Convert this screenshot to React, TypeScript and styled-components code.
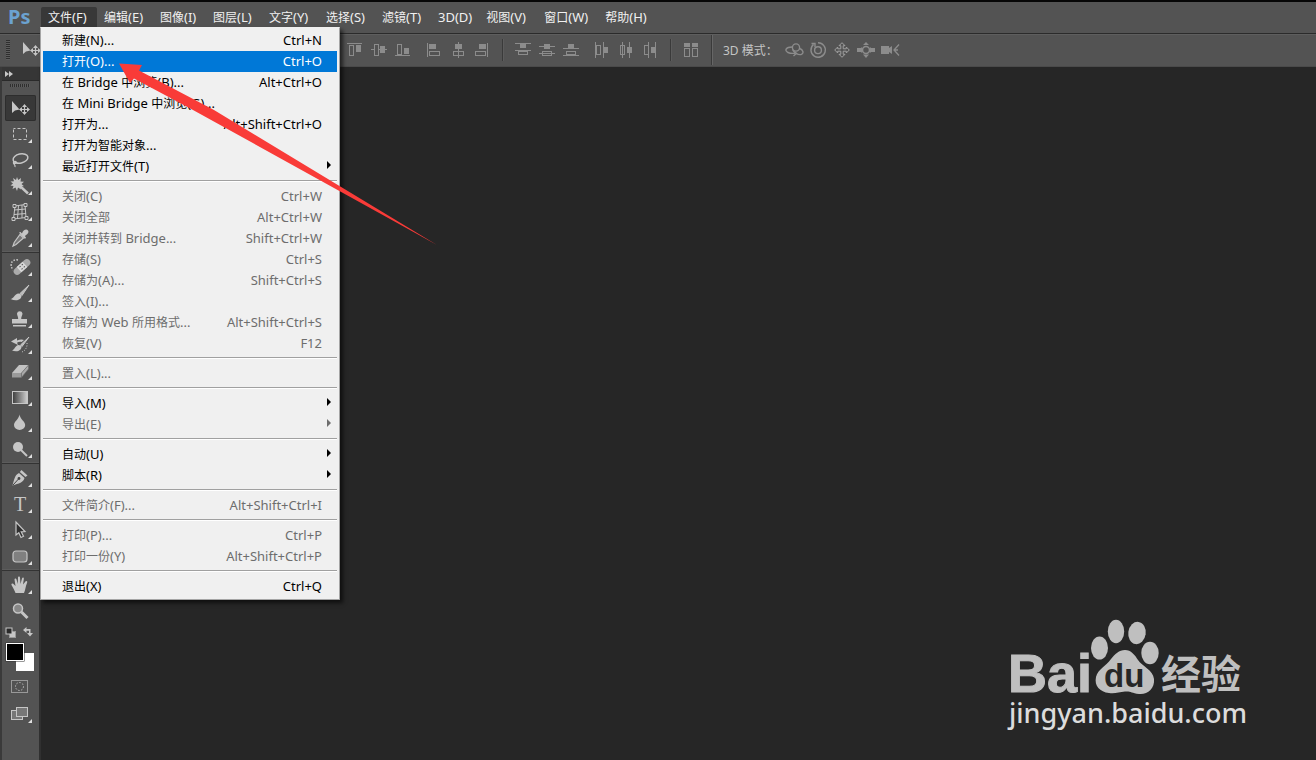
import React from 'react';
import styled, { createGlobalStyle } from 'styled-components';

const GlobalStyle = createGlobalStyle`
  *, *::before, *::after { box-sizing: border-box; }
  body {
    margin: 0;
    background: #262626;
    font-family: 'Noto Sans', 'Noto Sans CJK SC', sans-serif;
    font-size: 12px;
    color: #f0f0f0;
  }
  button { font: inherit; color: inherit; background: none; border: 0; padding: 0; margin: 0; text-align: left; }
  ul { list-style: none; margin: 0; padding: 0; }
`;

const Shell = styled.div`
  position: relative;
  display: flex;
  flex-direction: column;
  min-height: 100vh;
  overflow: hidden;
  background: #262626;
`;

const MenuBar = styled.nav`
  display: flex;
  align-items: flex-start;
  height: 34px;
  padding-top: 5px;
  border-top: 2px solid #060606;
  border-bottom: 1px solid #2b2b2b;
  background: #535353;
`;

const Brand = styled.span`
  width: 41px;
  padding-left: 8px;
  font: bold 20px/20px 'Noto Sans', sans-serif;
  color: #6ba2d0;
`;

const MenuSlot = styled.div<{ $slot: number }>`
  position: relative;
  flex: 0 0 ${(p) => p.$slot}px;
`;

const MenuTitle = styled.button<{ $open?: boolean }>`
  display: block;
  width: 100%;
  height: 20px;
  padding: 0 7px;
  line-height: 20px;
  white-space: nowrap;
  border-radius: 2px 2px 0 0;
  background: ${(p) => (p.$open ? '#383838' : 'transparent')};
`;

const Latin = styled.span`
  font-size: 13px;
`;

const Dropdown = styled.ul`
  position: absolute;
  z-index: 5;
  top: 20px;
  left: -1px;
  width: 300px;
  padding: 2px;
  color: #000;
  background: #f0f0f0;
  border: 1px solid #a5a5a5;
  border-top-color: #f0f0f0;
  box-shadow: 3px 3px 4px rgba(0, 0, 0, 0.6);
`;

const MenuItem = styled.button<{ $active?: boolean }>`
  display: flex;
  align-items: center;
  justify-content: space-between;
  width: 100%;
  height: 21px;
  padding: 0 15px 0 19px;
  line-height: 21px;
  white-space: nowrap;
  color: ${(p) => (p.$active ? '#fff' : '#000')};
  background: ${(p) => (p.$active ? '#0078d7' : 'transparent')};
  &:disabled { color: #6d6d6d; }
`;

const Rule = styled.li`
  height: 9px;
  padding-top: 3px;
  &::before {
    content: '';
    display: block;
    height: 2px;
    border-top: 1px solid #a0a0a0;
    border-bottom: 1px solid #fff;
  }
`;

const SubArrow = styled.svg`
  margin-right: -9px;
  margin-bottom: 4px;
`;

const OptionsBar = styled.div`
  display: flex;
  align-items: center;
  height: 33px;
  padding: 0 0 2px 6px;
  background: #535353;
  border-top: 1px solid #5e5e5e;
  border-bottom: 1px solid #4a4a4a;
`;

const Grip = styled.span`
  width: 4px;
  height: 20px;
  background: repeating-linear-gradient(#2e2e2e 0 1px, #5c5c5c 1px 2px);
`;

const CurrentTool = styled.button`
  width: 20px;
  height: 20px;
  margin: 0 290px 0 12px;
`;

const IconGroup = styled.div<{ $tight?: boolean }>`
  display: flex;
  gap: 8px;
  margin-left: ${(p) => (p.$tight ? 11 : 15)}px;
`;

const IconButton = styled.button`
  display: block;
  width: 16px;
  height: 16px;
`;

const Divider = styled.span<{ $full?: boolean }>`
  width: 2px;
  height: ${(p) => (p.$full ? 30 : 22)}px;
  margin-left: 12px;
  border-left: 1px solid #3a3a3a;
  border-right: 1px solid ${(p) => (p.$full ? '#666' : '#5c5c5c')};
`;

const ModeLabel = styled.span`
  width: 52px;
  margin-left: 10px;
  white-space: nowrap;
  color: #c4c4c4;
`;

const Workspace = styled.div`
  display: flex;
  flex: 1;
`;

const ToolPanel = styled.aside`
  display: flex;
  flex-direction: column;
  width: 41px;
  background: #535353;
  border-left: 2px solid #3a3a3a;
  border-right: 2px solid #303030;
`;

const PanelHeader = styled.button`
  display: block;
  height: 14px;
  padding-left: 3px;
  background: #363636;
  border-bottom: 1px solid #2a2a2a;
  line-height: 0;
`;

const PanelGrip = styled.span`
  width: 20px;
  height: 3px;
  margin: 3px 0 8px 8px;
  background: repeating-linear-gradient(90deg, #2e2e2e 0 1px, #5c5c5c 1px 2px);
`;

const ToolGroup = styled.div`
  display: flex;
  flex-direction: column;
  padding-left: 3px;
  & + & {
    margin-top: 1px;
    padding-top: 1px;
    border-top: 1px solid #333;
    box-shadow: 0 -1px 0 #5c5c5c;
  }
`;

const ToolButton = styled.button<{ $active?: boolean }>`
  display: block;
  width: 31px;
  height: 26px;
  line-height: 0;
  border-radius: 2px;
  background: ${(p) => (p.$active ? '#383838' : 'transparent')};
  box-shadow: ${(p) => (p.$active ? 'inset 0 0 0 1px #2d2d2d' : 'none')};
`;

const ColorArea = styled.div`
  padding-left: 3px;
  line-height: 0;
`;

const Canvas = styled.main`
  position: relative;
  flex: 1;
`;

const Watermark = styled.div`
  position: absolute;
  right: 69px;
  bottom: 30px;
  display: flex;
  flex-direction: column;
  width: 238px;
  color: #dcdcdc;
`;

const SiteLink = styled.a`
  font: 500 27px/34px 'Noto Sans', sans-serif;
  color: #dcdcdc;
  text-decoration: none;
  white-space: nowrap;
`;

const Annotation = styled.svg`
  position: absolute;
  z-index: 10;
  top: 60px;
  left: 116px;
  pointer-events: none;
`;

function Mixed({ text }: { text: string }) {
  const parts = text.split(/([\x20-\x7e]+)/).filter(Boolean);
  return (
    <span>
      {parts.map((p, i) => (/^[\x20-\x7e]/.test(p) ? <Latin key={i}>{p}</Latin> : p))}
    </span>
  );
}

type Entry = { label: string; keys?: string; off?: boolean; sub?: boolean; active?: boolean };

const fileMenu: (Entry | null)[] = [
  { label: '新建(N)...', keys: 'Ctrl+N' },
  { label: '打开(O)...', keys: 'Ctrl+O', active: true },
  { label: '在 Bridge 中浏览(B)...', keys: 'Alt+Ctrl+O' },
  { label: '在 Mini Bridge 中浏览(G)...' },
  { label: '打开为...', keys: 'Alt+Shift+Ctrl+O' },
  { label: '打开为智能对象...' },
  { label: '最近打开文件(T)', sub: true },
  null,
  { label: '关闭(C)', keys: 'Ctrl+W', off: true },
  { label: '关闭全部', keys: 'Alt+Ctrl+W', off: true },
  { label: '关闭并转到 Bridge...', keys: 'Shift+Ctrl+W', off: true },
  { label: '存储(S)', keys: 'Ctrl+S', off: true },
  { label: '存储为(A)...', keys: 'Shift+Ctrl+S', off: true },
  { label: '签入(I)...', off: true },
  { label: '存储为 Web 所用格式...', keys: 'Alt+Shift+Ctrl+S', off: true },
  { label: '恢复(V)', keys: 'F12', off: true },
  null,
  { label: '置入(L)...', off: true },
  null,
  { label: '导入(M)', sub: true },
  { label: '导出(E)', sub: true, off: true },
  null,
  { label: '自动(U)', sub: true },
  { label: '脚本(R)', sub: true },
  null,
  { label: '文件简介(F)...', keys: 'Alt+Shift+Ctrl+I', off: true },
  null,
  { label: '打印(P)...', keys: 'Ctrl+P', off: true },
  { label: '打印一份(Y)', keys: 'Alt+Shift+Ctrl+P', off: true },
  null,
  { label: '退出(X)', keys: 'Ctrl+Q' },
];

const menus: [string, number][] = [
  ['文件(F)', 56],
  ['编辑(E)', 56],
  ['图像(I)', 53],
  ['图层(L)', 56],
  ['文字(Y)', 57],
  ['选择(S)', 56],
  ['滤镜(T)', 56],
  ['3D(D)', 48],
  ['视图(V)', 58],
  ['窗口(W)', 61],
  ['帮助(H)', 58],
];

const G = '#8c8c8c';
const box = (x: number, y: number, w: number, h: number) => (
  <rect x={x + 0.5} y={y + 0.5} width={w - 1} height={h - 1} fill="none" stroke={G} />
);
const solid = (x: number, y: number, w: number, h: number) => (
  <rect x={x} y={y} width={w} height={h} fill={G} />
);

const alignVertical = [
  <>{solid(0, 1, 15, 1)}{box(2, 3, 5, 11)}{solid(9, 3, 5, 7)}</>,
  <>{solid(0, 7, 16, 1)}{box(3, 2, 5, 12)}<rect x="4" y="7" width="3" height="1" fill="#535353" />{solid(9, 4, 5, 7)}</>,
  <>{solid(0, 13, 15, 1)}{box(2, 2, 5, 11)}{solid(9, 6, 5, 6)}</>,
];
const alignHorizontal = [
  <>{solid(1, 1, 1, 14)}{solid(3, 2, 7, 5)}{box(3, 9, 11, 5)}</>,
  <>{solid(8, 0, 1, 16)}{solid(5, 2, 7, 5)}{box(3, 9, 11, 5)}</>,
  <>{solid(13, 1, 1, 14)}{solid(5, 2, 7, 5)}{box(1, 9, 11, 5)}</>,
];
const distributeVertical = [
  <>{solid(0, 1, 16, 1)}{solid(5, 2, 6, 4)}{solid(0, 8, 16, 1)}{box(3, 9, 10, 4)}</>,
  <>{solid(0, 4, 16, 1)}{solid(5, 2, 6, 5)}{solid(0, 11, 16, 1)}{box(3, 9, 10, 5)}</>,
  <>{solid(0, 6, 16, 1)}{solid(5, 2, 6, 4)}{solid(0, 13, 16, 1)}{box(3, 9, 10, 4)}</>,
];
const distributeHorizontal = [
  <>{solid(1, 0, 1, 16)}{box(2, 3, 5, 10)}{solid(9, 0, 1, 16)}{solid(10, 5, 4, 6)}</>,
  <>{solid(4, 0, 1, 16)}{box(2, 3, 5, 10)}{solid(11, 0, 1, 16)}{solid(9, 5, 5, 6)}</>,
  <>{solid(6, 0, 1, 16)}{box(2, 3, 5, 10)}{solid(13, 0, 1, 16)}{solid(9, 5, 4, 6)}</>,
];
const autoAlign = [
  <>{solid(1, 1, 6, 4)}{box(1, 6, 6, 9)}{solid(9, 1, 6, 4)}{box(9, 6, 6, 9)}</>,
];
const modes3d = [
  <g fill="none" stroke={G} strokeWidth="1.4">
    <circle cx="10" cy="5.500" r="3.600" />
    <path d="M6 5C0 5 -2 8.500 2 10.500C4 11.500 7 11.500 9 11.300M6.500 7.500C8 11 12 13 15 12.500C18.500 11.500 17 7.500 13.500 6.500M7.500 14L10.500 11.300L7.500 9" />
  </g>,
  <g fill="none" stroke={G} strokeWidth="1.4">
    <path d="M3.500 2.500A7.200 7.200 0 1 0 8 .8M1.500 1.500H5V5" />
    <circle cx="8" cy="8.200" r="3.400" />
  </g>,
  <path d="M8 .7L11 3.700H9.200V6.800H12.300V5L15.300 8L12.300 11V9.200H9.200V12.300H11L8 15.300L5 12.300H6.800V9.200H3.700V11L.7 8L3.700 5V6.800H6.800V3.700H5Z" fill="none" stroke="#a0a0a0" />,
  <g fill={G}>
    <path d="M8 0L11 3H5ZM8 16L11 12.500H5ZM-1 6H3V5L6 8L3 11V10H-1ZM17 6H13V5L10 8L13 11V10H17Z" />
    <circle cx="8" cy="8" r="3.500" fill="#535353" stroke={G} strokeWidth="1.600" />
  </g>,
  <g fill={G}>
    <path d="M-1 4H7V6L10 4V12L7 10V12H-1Z" />
    <path d="M17 2.500L12 8L17 13.500M12 8H16" fill="none" stroke={G} strokeWidth="1.300" />
  </g>,
];

function Icons({ items, name, tight }: { items: React.ReactNode[]; name: string; tight?: boolean }) {
  return (
    <IconGroup role="group" aria-label={name} $tight={tight}>
      {items.map((art, i) => (
        <IconButton key={i} type="button" aria-label={`${name} ${i + 1}`}>
          <svg width="16" height="16" viewBox="0 0 16 16" overflow="visible" display="block">{art}</svg>
        </IconButton>
      ))}
    </IconGroup>
  );
}

const C = '#c6c6c6';
const moveArt = (
  <>
    <path d="M7 6V18L10 15.500L14.500 14.500Z" fill={C} />
    <path d="M19.500 9L22 12H20.100V13.900H22V12L25 14.500L22 17V15.100H20.100V17H22L19.500 20L17 17H18.900V15.100H17V17L14 14.500L17 12V13.900H18.900V12H17Z" fill={C} />
  </>
);

type Tool = { name: string; art: React.ReactNode; single?: boolean };
const toolGroups: Tool[][] = [
  [
    { name: '移动', single: true, art: moveArt },
    { name: '选框', art: <rect x="8.500" y="7.500" width="13" height="11" fill="none" stroke={C} strokeDasharray="3 2" strokeDashoffset="1" /> },
    {
      name: '套索',
      art: (
        <g fill="none" stroke={C} strokeWidth="1.500">
          <ellipse cx="15.500" cy="11.500" rx="7.500" ry="4.500" transform="rotate(-12 15.500 11.500)" />
          <path d="M9 14C7 16 10.500 17.500 11.500 15.500C11.500 14 8.500 14 8.500 16.500C9.500 17.500 10.500 18 10 20" strokeWidth="1.200" />
        </g>
      ),
    },
    {
      name: '魔棒',
      art: (
        <>
          <path d="M12 4L13.200 7L16 5L15.500 8.500L19 8.700L16.500 11L19 13.300L15.500 13L16 16.500L13 14.500L12 18L10.500 14.500L7.500 16L8.500 13L5.500 12.500L8 10.500L5.500 8.500L9 8.300L8 5L11 7Z" fill={C} />
          <path d="M15 13L23 20.500" stroke={C} strokeWidth="2.400" />
        </>
      ),
    },
    {
      name: '透视裁剪',
      art: (
        <g fill="none" stroke={C}>
          <path d="M10 7L20 5.500L21 18.500L8.500 20ZM9.500 11L20.500 10M9 15.500L21 14.500M13.500 6.500L12.500 19.500M17 6L17 19" />
          <path d="M8 5.500H11V8.500H8ZM19 4.500H22V7.500H19ZM7 18.500H10V21.500H7ZM20 17.500H23V20.500H20Z" fill="#535353" />
        </g>
      ),
    },
    {
      name: '吸管',
      art: (
        <>
          <path d="M15 9.500L18.500 13L11 19.500L8 21L9.200 17.500Z" fill="#777" stroke={C} strokeWidth="1.200" />
          <path d="M14 7.500L15.500 7L17 8.500C18 5 21.500 3.500 23 5.500C24.500 7.500 22 9.500 19.800 11L21 12.500L20 14Z" fill={C} />
        </>
      ),
    },
  ],
  [
    {
      name: '修复画笔',
      art: (
        <>
          <path d="M13 6C7 5 4 10 8 16" fill="none" stroke={C} strokeWidth="1.500" strokeDasharray="1.500 1.500" />
          <g transform="rotate(-42 17 13)">
            <rect x="7" y="9.500" width="20" height="7" rx="3.500" fill="#aaa" />
            <rect x="13" y="9.500" width="8" height="7" fill="#d8d8d8" />
            <path d="M15 11.500H16.500M18 11.500H19.500M15 14.500H16.500M18 14.500H19.500" stroke="#555" />
          </g>
        </>
      ),
    },
    {
      name: '画笔',
      art: (
        <>
          <path d="M24 5L15 13.500L17 15.500Z" fill="#bbb" stroke={C} />
          <path d="M13.500 13.500C16.500 14 17.500 16 15.500 18.500C13 21 9 20.500 5.500 19C9 18.500 9.500 14 13.500 13.500Z" fill={C} />
        </>
      ),
    },
    {
      name: '图章',
      art: (
        <path d="M12 7.500A2.800 2.800 0 0 1 17.500 7.500C17.500 9.500 16.200 10 16.200 13H22V17.500H7V13H13.200C13.200 10 12 9.500 12 7.500ZM8 19H21V20.500H8Z" fill={C} />
      ),
    },
    {
      name: '历史画笔',
      art: (
        <>
          <path d="M6 9.500L12 6V8.500C14.500 7.500 17 7 19 8L16.500 10C14.500 9.500 13.500 10 12 10.800L13 13Z" fill={C} />
          <path d="M24 5L15.500 13L17 14.500Z" fill="#bbb" stroke={C} />
          <path d="M13.500 13C16.500 13.500 17.500 15 15.500 17.500C13 20 9.500 19.500 7 18.500C10 17.500 10 13.500 13.500 13Z" fill={C} />
          <path d="M22 11C22.500 15 20.500 18.500 17 20" fill="none" stroke={C} strokeDasharray="1 1.500" />
        </>
      ),
    },
    {
      name: '橡皮擦',
      art: (
        <>
          <path d="M7 15L14 7H23.500L16.500 15Z" fill="#c2c2c2" />
          <path d="M7 15H16.500V19.500H7Z" fill="#9a9a9a" />
          <path d="M16.500 15L23.500 7V11L16.500 19.500Z" fill="#aaa" stroke="#666" strokeWidth=".6" />
        </>
      ),
    },
    {
      name: '渐变',
      art: (
        <>
          <defs>
            <linearGradient id="ramp"><stop offset="0" stopColor="#3c3c3c" /><stop offset="1" stopColor="#d0d0d0" /></linearGradient>
          </defs>
          <rect x="7.500" y="7.500" width="15" height="12" fill="url(#ramp)" stroke={C} />
        </>
      ),
    },
    { name: '模糊', art: <path d="M14.500 4.500C15 9 20.200 11.500 20.200 15A5.600 5 0 0 1 9 15C9 11.500 14 9 14.500 4.500Z" fill={C} /> },
    {
      name: '减淡',
      art: (
        <>
          <circle cx="13" cy="11" r="5" fill={C} />
          <path d="M16 14L22 20" stroke={C} strokeWidth="2" />
        </>
      ),
    },
  ],
  [
    {
      name: '钢笔',
      art: (
        <>
          <path d="M16.500 5L22.500 10.500L20.500 12L14.800 7Z" fill={C} />
          <path d="M14 8L19.500 13C18.500 17.500 14 18.500 7.500 20.500C9 15.500 9.500 10 14 8Z" fill={C} />
          <path d="M8 20L13.500 14" stroke="#444" />
          <circle cx="14" cy="13.500" r="1.400" fill="#444" />
        </>
      ),
    },
    {
      name: '文字',
      art: <text x="15" y="20" textAnchor="middle" fill={C} fontFamily="Liberation Serif, serif" fontSize="20">T</text>,
    },
    { name: '路径选择', art: <path d="M11 5V18L13.800 15.800L16 20.500L18.500 19.300L16.200 14.800L20 14.500Z" fill="#303030" stroke={C} strokeWidth="1.200" /> },
    { name: '圆角矩形', art: <rect x="8" y="8" width="14" height="11" rx="3" fill="#808080" stroke={C} strokeWidth="1.200" /> },
  ],
  [
    {
      name: '抓手',
      art: <path d="M10.500 21C9.500 18 8 16 6.500 13C6 11.500 7.800 11 9 12.500L10.500 14L9.500 7.500C9.500 6 11.200 6 11.500 7.500L12.800 12L13 5.500C13 4 15 4 15 5.500L15.500 12L17 6.500C17.500 5 19.200 5.500 18.800 7L18 12.500L20.500 9.500C21.500 8.500 22.800 9.500 22 11C20.500 14 20.500 18 19 21Z" fill={C} />,
    },
    {
      name: '缩放',
      single: true,
      art: (
        <>
          <circle cx="13" cy="10.500" r="4.500" fill="#888" stroke={C} strokeWidth="1.500" />
          <path d="M16.500 14L22.500 20" stroke={C} strokeWidth="3" />
        </>
      ),
    },
  ],
];

export default function App() {
  return (
    <Shell>
      <GlobalStyle />
      <MenuBar aria-label="主菜单">
        <Brand>Ps</Brand>
        {menus.map(([label, slot], i) => (
          <MenuSlot key={label} $slot={slot}>
            <MenuTitle type="button" $open={i === 0}><Mixed text={label} /></MenuTitle>
            {i === 0 && (
              <Dropdown>
                {fileMenu.map((item, n) =>
                  item === null ? (
                    <Rule key={n} role="separator" />
                  ) : (
                    <li key={n}>
                      <MenuItem type="button" disabled={item.off} $active={item.active}>
                        <Mixed text={item.label} />
                        {item.keys && <Latin>{item.keys}</Latin>}
                        {item.sub && (
                          <SubArrow width="4" height="8" viewBox="0 0 4 8" aria-hidden="true">
                            <path d="M0 0L4 4L0 8Z" fill="currentColor" />
                          </SubArrow>
                        )}
                      </MenuItem>
                    </li>
                  ),
                )}
              </Dropdown>
            )}
          </MenuSlot>
        ))}
      </MenuBar>

      <OptionsBar>
        <Grip />
        <CurrentTool type="button" aria-label="移动工具">
          <svg width="20" height="20" viewBox="6 4 20 20" display="block">{moveArt}</svg>
        </CurrentTool>
        <Icons name="垂直对齐" items={alignVertical} />
        <Icons name="水平对齐" items={alignHorizontal} />
        <Divider />
        <Icons name="垂直分布" items={distributeVertical} tight />
        <Icons name="水平分布" items={distributeHorizontal} />
        <Divider />
        <Icons name="自动对齐" items={autoAlign} tight />
        <Divider $full />
        <ModeLabel>3D 模式：</ModeLabel>
        <Icons name="3D 模式" items={modes3d} tight />
      </OptionsBar>

      <Workspace>
        <ToolPanel>
          <PanelHeader type="button" aria-label="展开面板">
            <svg width="9" height="8" viewBox="0 0 9 8"><path d="M0 1L4 4L0 7ZM4 1L8 4L4 7Z" fill="#c8c8c8" /></svg>
          </PanelHeader>
          <PanelGrip />
          {toolGroups.map((group, g) => (
            <ToolGroup key={g}>
              {group.map((tool) => (
                <ToolButton key={tool.name} type="button" aria-label={tool.name} $active={tool.name === '移动'}>
                  <svg width="31" height="26" viewBox="0 0 31 26">
                    {tool.art}
                    {!tool.single && <path d="M27 18V22H23Z" fill="#e0e0e0" />}
                  </svg>
                </ToolButton>
              ))}
            </ToolGroup>
          ))}
          <ColorArea>
            <svg width="31" height="50" viewBox="0 0 31 50">
              <rect x="4.500" y="7.500" width="6" height="6" fill="#c6c6c6" stroke="#999" />
              <rect x="1" y="4" width="6" height="6" fill="#2a2a2a" stroke="#c6c6c6" />
              <path d="M18 6L21.500 3V5H25.500V9H28L25 12.500L22 9H24V6.800H21.500V9Z" fill="#c6c6c6" />
              <rect x="11" y="29" width="18" height="18" fill="#fff" />
              <rect x=".5" y="18.500" width="19" height="19" fill="#333" />
              <rect x="1" y="19" width="18" height="18" fill="#fff" />
              <rect x="2" y="20" width="16" height="16" fill="#000" />
            </svg>
            <ToolButton type="button" aria-label="快速蒙版">
              <svg width="31" height="26" viewBox="0 0 31 26">
                <rect x="6.500" y="6.500" width="16" height="12" fill="none" stroke="#999" />
                <circle cx="14.500" cy="12.500" r="4" fill="none" stroke="#bbb" strokeDasharray="1.500 1.500" />
              </svg>
            </ToolButton>
            <ToolButton type="button" aria-label="屏幕模式">
              <svg width="31" height="26" viewBox="0 0 31 26">
                <rect x="6.500" y="10.500" width="11" height="9" fill="#777" stroke={C} />
                <rect x="11.500" y="7.500" width="11" height="9" fill="#777" stroke={C} />
                <path d="M27 19V23H23Z" fill="#e0e0e0" />
              </svg>
            </ToolButton>
          </ColorArea>
        </ToolPanel>
        <Canvas>
          <Watermark>
            <svg width="238" height="76" viewBox="0 0 238 76" overflow="visible" role="img" aria-label="Baidu 经验">
              <g fill="#bfbfbf">
                <text x="-1" y="72" fontFamily="Liberation Sans, sans-serif" fontWeight="bold" fontSize="54" stroke="#bfbfbf">Bai</text>
                <ellipse cx="90.500" cy="28" rx="8.500" ry="11.500" />
                <ellipse cx="107" cy="11.500" rx="8.200" ry="11.700" />
                <ellipse cx="128" cy="13" rx="8.700" ry="11.200" transform="rotate(8 128 13)" />
                <ellipse cx="141" cy="33" rx="8.700" ry="11.200" />
                <path d="M116 30C122 30 126 35 129 40C133 46 144 50 145 59C146 69 138 75 130 74C122 73 122 71 116 71.500C110 72 106 74 100 73C91 72 85 66 87 57C89 49 97 46 102 39C106 34 110 30 116 30Z" />
                <text x="152" y="69" fontFamily="Noto Sans CJK SC, sans-serif" fontWeight="bold" fontSize="40">经验</text>
              </g>
              <text x="95" y="67" fill="#262626" fontFamily="Liberation Sans, sans-serif" fontWeight="bold" fontSize="33">du</text>
            </svg>
            <SiteLink href="#jingyan">jingyan.baidu.com</SiteLink>
          </Watermark>
        </Canvas>
      </Workspace>

      <Annotation width="324" height="188" viewBox="116 60 324 188" aria-hidden="true">
        <path d="M119 63.500L142 65L139 70.500L214 110L437 245L193 110L134 78.500L130 83Z" fill="#f93b38" />
      </Annotation>
    </Shell>
  );
}
